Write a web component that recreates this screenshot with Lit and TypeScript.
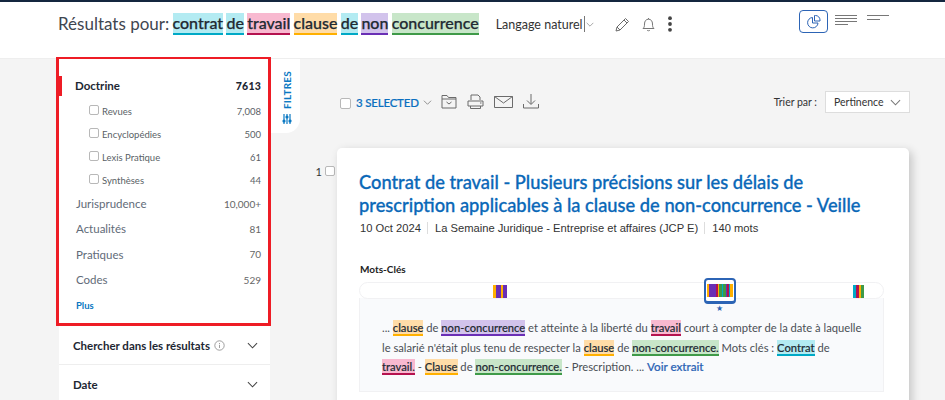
import { LitElement, html, css } from "lit";
import { customElement } from "lit/decorators.js";

const C = { o: "#ffb000", p: "#6a2fb5", r: "#b5124f", g: "#3f9a48", t: "#00a9c6" };
const strip = (cols: [string, number][]) =>
  html`<span class="strip">${cols.map(([c, w]) => html`<i style="background:${c};width:${w}px"></i>`)}</span>`;

const chev = (w = 12, col = "#555") => html`<svg width=${w} height=${Math.round(w * 0.6)} viewBox="0 0 12 7" fill="none" stroke=${col} stroke-width="1.1"><path d="M1 1l5 5 5-5"/></svg>`;
const box = () => html`<span class="cb"></span>`;

@customElement("app-root")
export class AppRoot extends LitElement {
  static styles = css`
    :host { display: block; width: 945px; height: 400px; overflow: hidden; background: #f4f4f4; font-family: Lato, sans-serif; color: #333; white-space: nowrap; }
    .top { height: 59px; box-sizing: border-box; border-top: 2px solid #14263f; border-bottom: 1px solid #eee; background: #fff; display: flex; padding: 10px 56px 0 58px; align-items: flex-start; }
    .query { display: flex; align-items: center; gap: 3.25px; font-size: 16px; color: #3f4650; height: 23px; }
    .query .lbl { font-size: 17px; margin-right: 0; }
    .hl { font-weight: 500; color: #222a33; -webkit-text-stroke: .25px #222a33; }
    .query .hl { line-height: 20px; height: 20px; border-bottom: 2px solid; display: inline-block; }
    .t { background: #b3ebf2; border-color: #00a9c6 !important; }
    .r { background: #f8b9d0; border-color: #b5124f !important; }
    .o { background: #ffdca8; border-color: #ffb000 !important; }
    .p { background: #d2c3ec; border-color: #6a2fb5 !important; }
    .g { background: #c8e6c9; border-color: #3f9a48 !important; }
    .lang { margin-left: 17px; font-size: 12.5px; color: #333; display: flex; align-items: center; height: 26px; margin-top: -1px; }
    .lang .bar { width: 1px; height: 16px; background: #777; margin: 0 1px 0 1px; }
    .acts { display: flex; align-items: center; gap: 12px; margin-left: 21px; height: 26px; margin-top: -1px; }
    .views { display: flex; margin-left: auto; margin-top: -2px; gap: 7px; align-items: flex-start; }
    .v1 { margin-top: 5px; }
    .v2 { margin: 5px 0 0 3px; }
    .vbtn { width: 29px; height: 23px; box-sizing: border-box; border: 1px solid #2c64b5; border-radius: 4px; display: flex; align-items: center; justify-content: center; }

    .main { display: flex; align-items: flex-start; }
    .side { margin-left: 56px; margin-top: -2px; width: 215px; flex: none; position: relative; }
    .nav { box-sizing: border-box; height: 269px; border: 3px solid #ee1c25; border-top-width: 2px; background: #fff; position: relative; padding: 15px 7px 0 16px; }
    .mark { position: absolute; left: 0; top: 17px; width: 3px; height: 20px; background: #ee1c25; }
    .row { display: flex; justify-content: space-between; align-items: center; }
    .r1 { height: 23px; font-size: 11.5px; font-weight: 700; color: #1d2733; margin-bottom: 3px; }
    .r1 b { font-size: 10.5px; letter-spacing: .2px; }
    .sub { height: 23px; font-size: 9.5px; color: #5a5f66; padding-left: 14px; }
    .sub.last { margin-bottom: -1px; }
    .sub span { display: flex; align-items: center; gap: 3px; }
    .sub em, .main-r em { font-style: normal; }
    .cb { display: inline-block; width: 8px; height: 8px; border: 1px solid #b8b8b8; border-radius: 2px; background: #fff; margin-top: -3px; }
    .sub em { font-size: 9.5px; }
    .main-r { height: 25.3px; font-size: 11.5px; color: #5f6b78; padding-left: 1px; }
    .main-r em { font-size: 10px; color: #666; }
    .plus { display: block; font-size: 9.5px; font-weight: 700; color: #0a78c2; margin: 7.5px 0 0 1px; }
    .acc { margin-left: 3px; margin-right: 1px; background: #fff; height: 39px; box-sizing: border-box; border-bottom: 1px solid #eee; display: flex; align-items: center; justify-content: space-between; padding: 0 12px 0 14px; font-size: 11.5px; font-weight: 700; color: #1d2733; }
    .acc span { display: flex; align-items: center; gap: 4px; }

    .tab { width: 29px; height: 74px; flex: none; background: #fff; border-radius: 0 0 14px 0; display: flex; align-items: flex-start; justify-content: center; color: #0a78c2; font-size: 10px; font-weight: 700; box-sizing: border-box; padding: 12px 0 0 2px; }
    .tab div { writing-mode: vertical-rl; transform: rotate(180deg); display: flex; align-items: center; gap: 5px; letter-spacing: .2px; }

    .col { margin-left: 15px; flex: 1; min-width: 0; }
    .tools { display: flex; align-items: center; height: 32px; margin: 27px 0 0 25px; position: relative; }
    .tools .cb { width: 9px; height: 9px; margin: 3px 5px 0 0; }
    .sel { color: #0a6fc0; font-size: 11.5px; font-weight: 500; letter-spacing: -.2px; -webkit-text-stroke: .2px #0a6fc0; margin-right: 4px; }
    .ticons { display: flex; align-items: center; gap: 10px; margin-left: 9px; margin-top: -1px; }
    .sort { margin-left: auto; margin-right: 35px; display: flex; align-items: center; gap: 8px; font-size: 10.5px; color: #333; }
    .dd { width: 85px; height: 22px; box-sizing: border-box; background: #fff; border: 1px solid #ddd; display: flex; align-items: center; justify-content: space-between; padding: 0 8px; font-size: 10.5px; color: #333; }

    .res { display: flex; margin-top: 30px; }
    .num { width: 22px; flex: none; display: flex; justify-content: flex-end; gap: 3px; padding: 17px 2px 0 0; font-size: 11px; box-sizing: border-box; align-items: flex-start; }
    .num .cb { margin: 1px 0 0; }
    .card { width: 572px; height: 260px; flex: none; background: #fff; border-radius: 5px; box-shadow: 3px 3px 10px rgba(0,0,0,.2); box-sizing: border-box; padding: 23px 0 0 22px; }
    h2 { margin: 0; font-size: 18.3px; line-height: 23px; font-weight: 500; color: #0a68b8; -webkit-text-stroke: .3px #0a68b8; width: 530px; white-space: normal; }
    .meta { font-family: "Liberation Sans", Arial, sans-serif; font-size: 11.2px; color: #333; margin: 5px 0 0 1px; display: flex; }
    .meta span + span { border-left: 1px solid #ddd; margin-left: 6px; padding-left: 7px; }
    .kw { font-size: 10px; font-weight: 700; color: #222; margin: 29px 0 0 1px; }
    .map { position: relative; margin: 7px 0 0 0; width: 525px; height: 17px; background: #fff; border: 1px solid #f1f1f3; border-radius: 9px; box-sizing: border-box; }
    .strip { position: absolute; display: flex; top: 1px; height: 13px; }
    .strip i { display: block; height: 100%; }
    .cur { position: absolute; left: 344px; top: -5px; width: 32px; height: 26px; box-sizing: border-box; border: 2px solid #2c64b5; border-bottom-width: 3px; border-radius: 4px; display: flex; align-items: center; justify-content: center; background: #fff; }
    .cur .strip { position: static; height: 13px; }
    .star { position: absolute; left: 356px; top: 21px; font-size: 8px; line-height: 8px; color: #2c64b5; }
    .ex { width: 525px; height: 94px; box-sizing: border-box; background: #f9fafc; border: 1px solid #f1f1f3; border-top: none; padding: 20px 0 0 22px; font-size: 11.2px; line-height: 19.5px; color: #4a4f55; margin-top: -1px; }
    .ex .hl { padding: 1px 0 0; border-bottom: 2px solid; -webkit-text-stroke: .15px #222a33; }
    .ex a { color: #2c64b5; font-size: 11.6px; font-weight: 500; -webkit-text-stroke: .2px #2c64b5; }
  `;

  render() {
    const ico = "#6b6b6b";
    return html`
      <div class="top">
        <div class="query">
          <span class="lbl">Résultats pour:</span>
          <span class="hl t">contrat</span><span class="hl t">de</span><span class="hl r">travail</span><span class="hl o">clause</span><span class="hl t">de</span><span class="hl p">non</span><span class="hl g">concurrence</span>
        </div>
        <div class="lang">Langage naturel<span class="bar"></span>${chev(8, "#888")}</div>
        <div class="acts">
          <svg width="15" height="15" viewBox="0 0 15 15" fill="none" stroke=${ico} stroke-width="1"><path d="M1 14l1-4L10.500 1.500l3 3L5 13zM9 3l3 3M2 10l3 3"/></svg>
          <svg width="13" height="15" viewBox="0 0 13 15" fill="none" stroke="#777" stroke-width="1"><path d="M1 11.500h11c-1.200-1-1.500-2-1.500-4.500 0-3-1.600-4.800-4-4.800S2.500 4 2.500 7c0 2.500-.3 3.500-1.500 4.500zM6.500 1v1.200M5 13c.5 1 2.500 1 3 0"/></svg>
          <svg width="6" height="16" viewBox="0 0 6 16" fill="#444"><circle cx="3" cy="2.200" r="1.900"/><circle cx="3" cy="8" r="1.900"/><circle cx="3" cy="13.800" r="1.900"/></svg>
        </div>
        <div class="views">
          <span class="vbtn"><svg width="15" height="15" viewBox="0 0 15 15" fill="none" stroke="#2c64b5" stroke-width="1"><path d="M6.500 3.500a5.200 5.200 0 1 0 5.500 5.500H6.500z"/><path d="M8.500 1.500h1a4.500 4.500 0 0 1 4.500 4.500v1H8.500z"/></svg></span>
          <svg class="v1" width="22" height="11" viewBox="0 0 22 11" stroke="#777" stroke-width="1"><path d="M0 .5h22M0 3.500h22M0 6.500h22M0 9.500h13"/></svg>
          <svg class="v2" width="22" height="6" viewBox="0 0 22 6" stroke="#777" stroke-width="1"><path d="M0 .5h22M0 4.500h13"/></svg>
        </div>
      </div>
      <div class="main">
        <div class="side">
          <div class="nav">
            <span class="mark"></span>
            <div class="row r1"><span>Doctrine</span><b>7613</b></div>
            <div class="row sub"><span>${box()}Revues</span><em>7,008</em></div>
            <div class="row sub"><span>${box()}Encyclopédies</span><em>500</em></div>
            <div class="row sub"><span>${box()}Lexis Pratique</span><em>61</em></div>
            <div class="row sub last"><span>${box()}Synthèses</span><em>44</em></div>
            <div class="row main-r"><span>Jurisprudence</span><em>10,000+</em></div>
            <div class="row main-r"><span>Actualités</span><em>81</em></div>
            <div class="row main-r"><span>Pratiques</span><em>70</em></div>
            <div class="row main-r"><span>Codes</span><em>529</em></div>
            <span class="plus">Plus</span>
          </div>
          <div class="acc"><span>Chercher dans les résultats
            <svg width="11" height="11" viewBox="0 0 11 11" fill="none" stroke="#888" stroke-width=".8"><circle cx="5.500" cy="5.500" r="4.700"/><path d="M5.500 4.800v3.200M5.500 3v1"/></svg></span>${chev(11, "#444")}</div>
          <div class="acc"><span>Date</span>${chev(11, "#444")}</div>
        </div>
        <div class="tab"><div><svg width="10" height="10" viewBox="0 0 10 10" fill="#0a78c2" stroke="#0a78c2" stroke-width="1.200"><path d="M2 0v10M5 0v10M8 0v10"/><circle cx="2" cy="3" r="1"/><circle cx="5" cy="7" r="1"/><circle cx="8" cy="3" r="1"/></svg>FILTRES</div></div>
        <div class="col">
          <div class="tools">
            ${box()}
            <span class="sel">3 SELECTED</span>${chev(9, "#777")}
            <div class="ticons">
              <svg width="16" height="15" viewBox="0 0 16 15" fill="none" stroke=${ico} stroke-width="1"><path d="M1 14V1.500h5l1.500 2H15V14zM1 5h14M5.500 8l2.500 2 2.500-2"/></svg>
              <svg width="17" height="15" viewBox="0 0 17 15" fill="none" stroke=${ico} stroke-width="1"><path d="M4 6V1h7l2 2v3M1 7h15v5H1zM3.500 12v2.500h10V12M13 9h1.500"/></svg>
              <svg width="19" height="12" viewBox="0 0 19 12" fill="none" stroke=${ico} stroke-width="1"><path d="M.5.500h18v11H.5zM.5.500l9 6.500 9-6.500"/></svg>
              <svg width="16" height="15" viewBox="0 0 16 15" fill="none" stroke=${ico} stroke-width="1"><path d="M8 0v10M4 6.500L8 10.500l4-4M.5 10v4h15v-4"/></svg>
            </div>
            <div class="sort"><span>Trier par :</span><div class="dd">Pertinence ${chev(11, "#777")}</div></div>
          </div>
          <div class="res">
            <div class="num">1 ${box()}</div>
            <div class="card">
              <h2>Contrat de travail - Plusieurs précisions sur les délais de prescription applicables à la clause de non-concurrence - Veille</h2>
              <div class="meta"><span>10 Oct 2024</span><span>La Semaine Juridique - Entreprise et affaires (JCP E)</span><span>140 mots</span></div>
              <div class="kw">Mots-Clés</div>
              <div class="map">
                <span class="strip" style="left:133px">${strip([[C.o, 3], [C.p, 5], [C.o, 2], [C.p, 4]])}</span>
                <span class="cur">${strip([[C.o, 2], [C.p, 7], [C.r, 2], [C.o, 1], [C.g, 3], [C.t, 1], [C.g, 3], [C.p, 1], [C.r, 2], [C.t, 1], [C.o, 3]])}</span>
                <span class="star">★</span>
                <span class="strip" style="left:493px">${strip([[C.t, 3], [C.r, 3], [C.o, 2], [C.g, 3]])}</span>
              </div>
              <div class="ex">
                ... <span class="hl o">clause</span> de <span class="hl p">non-concurrence</span> et atteinte à la liberté du <span class="hl r">travail</span> court à compter de la date à laquelle<br>
                le salarié n'était plus tenu de respecter la <span class="hl o">clause</span> de <span class="hl g">non-concurrence.</span> Mots clés : <span class="hl t">Contrat</span> de<br>
                <span class="hl r">travail.</span> - <span class="hl o">Clause</span> de <span class="hl g">non-concurrence.</span> - Prescription. ... <a>Voir extrait</a>
              </div>
            </div>
          </div>
        </div>
      </div>
    `;
  }
}
